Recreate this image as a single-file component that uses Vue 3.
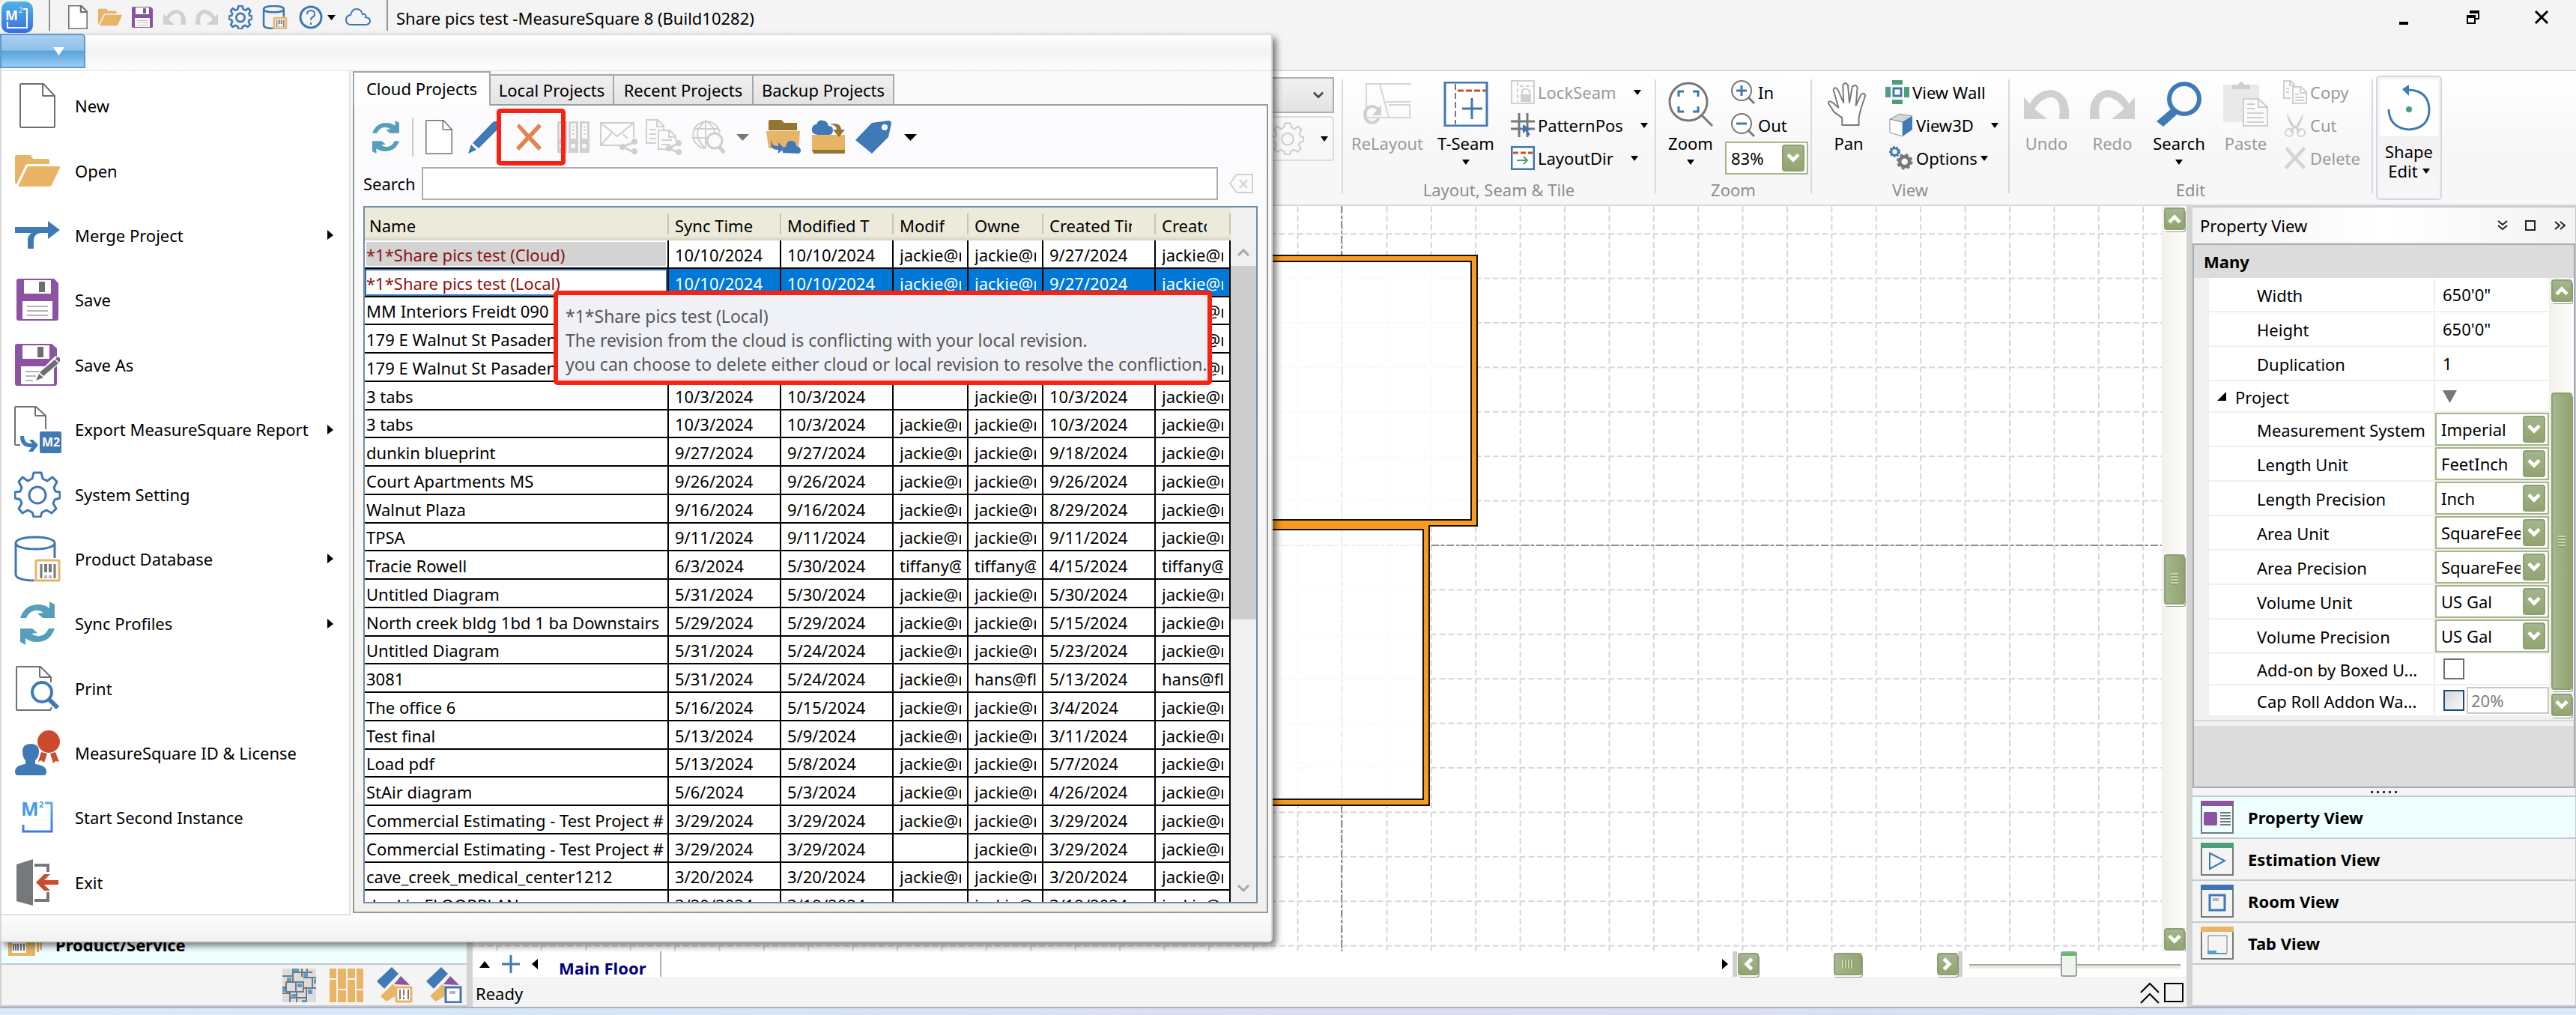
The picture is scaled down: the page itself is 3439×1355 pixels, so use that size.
<script setup>
import { ref } from 'vue'

const menu = [
  { label: 'New', icon: 'doc', w: 48, h: 60 },
  { label: 'Open', icon: 'folder', w: 60, h: 42 },
  { label: 'Merge Project', icon: 'merge', w: 60, h: 37, sub: true },
  { label: 'Save', icon: 'save', w: 56, h: 56 },
  { label: 'Save As', icon: 'saveas', w: 60, h: 56 },
  { label: 'Export MeasureSquare Report', icon: 'export', w: 63, h: 63, sub: true },
  { label: 'System Setting', icon: 'gear', w: 62, h: 62, color: '#3f77b3' },
  { label: 'Product Database', icon: 'db', w: 62, h: 62, sub: true },
  { label: 'Sync Profiles', icon: 'sync', w: 46, h: 58, sub: true },
  { label: 'Print', icon: 'print', w: 58, h: 60 },
  { label: 'MeasureSquare ID & License', icon: 'id', w: 60, h: 60 },
  { label: 'Start Second Instance', icon: 'm2', w: 44, h: 44 },
  { label: 'Exit', icon: 'exit', w: 56, h: 62 }
]

const tabs = [
  { label: 'Cloud Projects', w: 184, on: true },
  { label: 'Local Projects', w: 165 },
  { label: 'Recent Projects', w: 186 },
  { label: 'Backup Projects', w: 188 }
]

const columns = [
  { label: 'Name', w: 406 },
  { label: 'Sync Time', w: 150 },
  { label: 'Modified Time', w: 150 },
  { label: 'Modified By', w: 100 },
  { label: 'Owner', w: 100 },
  { label: 'Created Time', w: 150 },
  { label: 'Creator', w: 100 }
]

const j = 'jackie@m'
const t = 'tiffany@m'
const rows = [
  ['*1*Share pics test (Cloud)', '10/10/2024', '10/10/2024', j, j, '9/27/2024', j],
  ['*1*Share pics test (Local)', '10/10/2024', '10/10/2024', j, j, '9/27/2024', j],
  ['MM Interiors Freidt 090', '', '', '', '', '', j],
  ['179 E Walnut St Pasaden', '', '', '', '', '', j],
  ['179 E Walnut St Pasaden', '', '', '', '', '', j],
  ['3 tabs', '10/3/2024', '10/3/2024', '', j, '10/3/2024', j],
  ['3 tabs', '10/3/2024', '10/3/2024', j, j, '10/3/2024', j],
  ['dunkin blueprint', '9/27/2024', '9/27/2024', j, j, '9/18/2024', j],
  ['Court Apartments MS', '9/26/2024', '9/26/2024', j, j, '9/26/2024', j],
  ['Walnut Plaza', '9/16/2024', '9/16/2024', j, j, '8/29/2024', j],
  ['TPSA', '9/11/2024', '9/11/2024', j, j, '9/11/2024', j],
  ['Tracie Rowell', '6/3/2024', '5/30/2024', t, t, '4/15/2024', t],
  ['Untitled Diagram', '5/31/2024', '5/30/2024', j, j, '5/30/2024', j],
  ['North creek bldg 1bd 1 ba Downstairs', '5/29/2024', '5/29/2024', j, j, '5/15/2024', j],
  ['Untitled Diagram', '5/31/2024', '5/24/2024', j, j, '5/23/2024', j],
  ['3081', '5/31/2024', '5/24/2024', j, 'hans@fl', '5/13/2024', 'hans@fl'],
  ['The office 6', '5/16/2024', '5/15/2024', j, j, '3/4/2024', j],
  ['Test final', '5/13/2024', '5/9/2024', j, j, '3/11/2024', j],
  ['Load pdf', '5/13/2024', '5/8/2024', j, j, '5/7/2024', j],
  ['StAir diagram', '5/6/2024', '5/3/2024', j, j, '4/26/2024', j],
  ['Commercial Estimating - Test Project #', '3/29/2024', '3/29/2024', j, j, '3/29/2024', j],
  ['Commercial Estimating - Test Project #', '3/29/2024', '3/29/2024', '', j, '3/29/2024', j],
  ['cave_creek_medical_center1212', '3/20/2024', '3/20/2024', j, j, '3/20/2024', j],
  ['dunkin FLOORPLAN', '3/20/2024', '3/19/2024', '', j, '3/19/2024', j]
]

const props = [
  { name: 'Width', text: '650\'0"' },
  { name: 'Height', text: '650\'0"' },
  { name: 'Duplication', text: '1' },
  { name: 'Project', head: true },
  { name: 'Measurement System', pick: 'Imperial' },
  { name: 'Length Unit', pick: 'FeetInch' },
  { name: 'Length Precision', pick: 'Inch' },
  { name: 'Area Unit', pick: 'SquareFeet' },
  { name: 'Area Precision', pick: 'SquareFeet' },
  { name: 'Volume Unit', pick: 'US Gal' },
  { name: 'Volume Precision', pick: 'US Gal' },
  { name: 'Add-on by Boxed U...', check: true },
  { name: 'Cap Roll Addon Wa...', check: true, pct: '20%' }
]

const views = [
  { label: 'Property View', icon: 'vprop', on: true },
  { label: 'Estimation View', icon: 'vest' },
  { label: 'Room View', icon: 'vroom' },
  { label: 'Tab View', icon: 'vtab' }
]

const tools = [
  { name: 'Share project', icon: 'mail', w: 50, h: 48 },
  { name: 'Share copy', icon: 'sharecopy', w: 48, h: 48 },
  { name: 'View on web', icon: 'globe', w: 46, h: 46 }
]
const query = ref('')
const zoomLevel = ref(47)
</script>

<template>
  <div class="app">
    <svg class="defs" width="0" height="0" aria-hidden="true">
      <defs>
        <linearGradient id="logo-fill" x1="0" y1="0" x2="0" y2="1">
          <stop offset="0" stop-color="#4eb2e6" /><stop offset="1" stop-color="#3a6fe0" />
        </linearGradient>
        <linearGradient id="m2-fill" x1="0" y1="0" x2="0" y2="1">
          <stop offset="0" stop-color="#56b0e8" /><stop offset="1" stop-color="#3f78e0" />
        </linearGradient>
      </defs>
      <symbol id="i-doc" viewBox="0 0 48 60" preserveAspectRatio="none"><path class="thin" d="M2 1h30l15 16v41q0 1-1 1H2q-1 0-1-1V2q0-1 1-1z" fill="#fff" stroke="#6f7073" /><path class="thin" d="M31 1v15q0 1 1 1h15" fill="none" stroke="#6f7073" /></symbol>
      <symbol id="i-folder" viewBox="0 0 60 42"><path d="M0 2q0-2 2-2h18q2 0 3 3l1 2h19q3 0 3 3v4H18q-3 0-4 2L2 39q-2-1-2-3z" fill="#e8b566" /><path d="M17 15h42q2 0 1 2L49 40q-1 2-3 2H4z" fill="#e8b566" /></symbol>
      <symbol id="i-merge" viewBox="0 0 60 37"><path d="M0 8h44V0l16 12-16 12v-8H36q-10 0-11 9v12h-8V25q0-5 5-9H0z" fill="#3f7ab6" /></symbol>
      <symbol id="i-save" viewBox="0 0 56 56"><path d="M3 0h47l6 6v47q0 3-3 3H3q-3 0-3-3V3q0-3 3-3z" fill="#8c53a2" /><path d="M10 2h36v18H10zM8 30h40v24H8z" fill="#fff" /><path d="M30 4h8v14h-8z" fill="#6d6e71" /><path d="M14 37h28M14 43h28M14 49h28" stroke="#b5b5b7" stroke-width="2" /></symbol>
      <symbol id="i-saveas" viewBox="0 0 60 56"><path d="M3 0h46l7 6v47q0 3-3 3H3q-3 0-3-3V3q0-3 3-3z" fill="#8c53a2" /><path d="M10 2h36v18H10zM8 30h44v24H8z" fill="#fff" /><path d="M30 4h8v14h-8z" fill="#6d6e71" /><path d="M14 37h20M14 43h14M14 49h10" stroke="#b5b5b7" stroke-width="2" /><path d="M27 51l5-13 22-22 9 7-25 22z" fill="#fff" /><path d="M28 49l4-9 6 5zM33 38l20-17 5 5-20 17zM54 20l2-2q2-1 4 1t0 4l-1 2z" fill="#6d6e71" /></symbol>
      <symbol id="i-export" viewBox="0 0 63 63"><path d="M8 52H2q-1 0-1-1V2q0-1 1-1h27l13 12v18M28 1v11q0 1 1 1h13" fill="none" stroke="#6f7073" stroke-width="2" /><path d="M8 40h5q0 10 10 10h1l-4-5h5l7 7-7 9h-6l4-6q-15 1-15-15z" fill="#3f7ab6" /><rect x="34" y="34" width="29" height="29" rx="2" fill="#3f7ab6" /></symbol>
      <symbol id="i-gear" viewBox="0 0 62 62"><path class="bold" d="M26 2h10l2 8 6 3 7-5 6 6-4 8 2 5 6 1v8l-7 2-2 5 4 7-6 6-7-4-6 3-2 6H26l-2-6-6-3-7 4-5-6 4-7-2-5-7-2v-8l7-1 2-5-4-8 5-6 7 5 6-3z" fill="none" stroke="currentColor" stroke-linejoin="round" /><circle class="bold" cx="31" cy="32" r="11" fill="none" stroke="currentColor" /></symbol>
      <symbol id="i-db" viewBox="0 0 62 62"><path class="bold" d="M54 30V10c0-5-12-8-26-8S2 5 2 10s12 8 26 8 26-3 26-8M2 10v42c0 5 11 8 25 8" fill="none" stroke="#3f77b3" /><rect class="bold" x="29" y="33" width="31" height="27" rx="1" fill="#fff" stroke="#e8b566" /><path d="M36 38v19M54 38v19" stroke="#77787b" stroke-width="3" /><path d="M42 38v11M48 38v11" stroke="#77787b" stroke-width="4" /><path d="M42 53v4M48 53v4" stroke="#b5b5b7" stroke-width="4" /></symbol>
      <symbol id="i-sync" viewBox="0 0 46 58" preserveAspectRatio="none"><path d="M0 22Q6 4 24 4q9 0 15 5V0l7 4v18H30l-7-6 8-1q-5-4-11-3-8 1-12 10z" fill="#559fbc" /><path d="M46 36Q40 54 22 54q-9 0-15-5v9l-7-4V36h16l7 6-8 1q5 4 11 3 8-1 12-10z" fill="#559fbc" /></symbol>
      <symbol id="i-print" viewBox="0 0 58 60"><path d="M47 22V15L33 1H2q-1 0-1 1v56q0 1 1 1h44l2-4M32 1v13q0 1 1 1h15" fill="none" stroke="#6f7073" stroke-width="2" /><circle cx="35" cy="35" r="13" fill="#fff" stroke="#3f7ab6" stroke-width="4" /><path d="M45 45l11 11" stroke="#3f7ab6" stroke-width="6" /></symbol>
      <symbol id="i-id" viewBox="0 0 60 60"><path d="M10 28q0-10 11-10t11 10q0 8-5 12v5q15 2 15 10 0 5-4 5H4q-4 0-4-5 0-8 14-10v-5q-4-4-4-12z" fill="#3f7ab6" /><circle cx="45" cy="15" r="15" fill="#cc4b2f" /><path d="M35 29l8 2-4 12-4-3-4 2zM47 31l7-2 5 13-5-1-3 3z" fill="#cc4b2f" /></symbol>
      <symbol id="i-m2" viewBox="0 0 44 44"><path d="M3 32v9h38V3h-9" fill="none" stroke="url(#m2-fill)" stroke-width="3" /></symbol>
      <symbol id="i-exit" viewBox="0 0 56 62"><path d="M0 7l22-7v62L0 56z" fill="#77787b" /><path d="M24 8h18v9M24 55h18V44" fill="none" stroke="#77787b" stroke-width="4" /><path d="M26 31l11-11h8l-8 8h19v6H37l8 8h-8z" fill="#cc4b2f" /></symbol>
      <symbol id="i-undo" viewBox="0 0 60 40" preserveAspectRatio="none"><path d="M0 10l8 9Q18 0 38 0q25 6 22 40H47q4-30-12-30-12 2-21 16l17 14H0z" fill="#d0d0d1" /></symbol>
      <symbol id="i-help" viewBox="0 0 32 32"><circle cx="16" cy="16" r="14" fill="none" stroke="#3f77b3" stroke-width="3" /><path d="M11 12q0-5 5-5t5 5q0 3-3 4-2 1-2 4M16 23v3" fill="none" stroke="#3f77b3" stroke-width="2" /></symbol>
      <symbol id="i-cloud" viewBox="0 0 34 24"><path d="M8 22q-7 0-7-7 0-5 6-6Q9 1 15 1t8 7q3-1 4 1 1 1 0 3 6 1 6 5t-5 5z" fill="none" stroke="#3f77b3" stroke-width="2" /></symbol>
      <symbol id="i-tri" viewBox="0 0 10 7" preserveAspectRatio="none"><path d="M0 0h10L5 7z" fill="currentColor" /></symbol>
      <symbol id="i-chev" viewBox="0 0 16 12"><path d="M2 2l6 6 6-6" fill="none" stroke="currentColor" stroke-width="4" /></symbol>
      <symbol id="i-thin" viewBox="0 0 16 12"><path d="M1 2l7 7 7-7" fill="none" stroke="currentColor" stroke-width="3" /></symbol>
      <symbol id="i-pencil" viewBox="0 0 42 44"><path d="M0 44l4-12 7 7zM6 30L32 3q4-4 8-1t1 8L14 37z" fill="#3f7ab6" /></symbol>
      <symbol id="i-x" viewBox="0 0 36 36"><path d="M2 4l3-4 13 14L31 0l4 4-13 14 13 14-4 4-13-14L5 36l-4-4 13-14z" fill="currentColor" /></symbol>
      <symbol id="i-binder" viewBox="0 0 44 42"><path d="M0 0h13v42H0zM15 0h13v42H15zM30 0h13v42H30z" fill="#d0d0d0" /><path d="M3 3h7v20H3zM18 3h7v20h-7zM33 3h7v20h-7z" fill="#fbfbfd" /><path d="M5 7h3M5 12h3M5 17h3M20 7h3M20 12h3M20 17h3M35 7h3M35 12h3M35 17h3" stroke="#d0d0d0" stroke-width="2" /><circle cx="6" cy="33" r="3" fill="#fbfbfd" /><circle cx="21" cy="33" r="3" fill="#fbfbfd" /><circle cx="36" cy="33" r="3" fill="#fbfbfd" /></symbol>
      <symbol id="i-mail" viewBox="0 0 50 44"><path d="M28 33H1V3h44v20M1 3l22 18L45 3M1 33l15-17M31 18l6 6" fill="none" stroke="#cfcfcf" stroke-width="2" /><path d="M45 29L30 35l15 7" fill="none" stroke="#cfcfcf" stroke-width="3" /><circle cx="46" cy="28" r="4" fill="#cfcfcf" /><circle cx="30" cy="35" r="4" fill="#cfcfcf" /><circle cx="46" cy="41" r="4" fill="#cfcfcf" /></symbol>
      <symbol id="i-sharecopy" viewBox="0 0 48 48"><path d="M14 32H1V1h15l8 8v5M15 1v9h9M5 14h9M5 20h9M5 26h9M34 40H17V15h15l8 8v6M31 15v9h9M21 28h14M21 34h12" fill="none" stroke="#d0d0d0" stroke-width="2" /><path d="M44 32L31 39l13 6" fill="none" stroke="#cfcfcf" stroke-width="3" /><circle cx="44" cy="32" r="4" fill="#cfcfcf" /><circle cx="31" cy="39" r="4" fill="#cfcfcf" /><circle cx="44" cy="44" r="4" fill="#cfcfcf" /></symbol>
      <symbol id="i-globe" viewBox="0 0 46 46"><g fill="none" stroke="#cfcfcf" stroke-width="2"><path d="M18 38A18 18 0 1 1 38 17M19 1q-22 18 0 37M19 1q12 8 12 17M19 1v36M3 12h33M1 24h20" /><circle cx="31" cy="28" r="10" stroke-width="3" fill="#fbfbfd" /><path d="M37 36l7 8" stroke-width="5" /></g></symbol>
      <symbol id="i-cloudin" viewBox="0 0 46 46"><path d="M3 2q0-2 2-2h15l4 4h17v10H3z" fill="#957530" /><path d="M0 15h45l-2 23H3z" fill="#e8b566" /><path d="M22 44q-2-8 4-8 1-9 8-8 6 1 6 7 6 1 6 6 0 4-4 4z" fill="#3f7ab6" /><path d="M7 26q-1 10 9 9v-5l8 8-8 7v-5Q3 40 7 26z" fill="#3f7ab6" /></symbol>
      <symbol id="i-cloudout" viewBox="0 0 44 46"><path d="M0 20h44v22H0z" fill="#e8b566" /><path d="M0 40h44v5H2z" fill="#957530" /><path d="M8 20q-9-1-8-8 1-6 6-6 3-7 9-5 6 1 7 7 6 0 6 6t-6 6z" fill="#3f7ab6" /><path d="M24 6q14-4 15 7h5l-8 10-8-10h5q0-6-9-7z" fill="#957530" /></symbol>
      <symbol id="i-tag" viewBox="0 0 48 44"><path d="M0 26L22 3l22-3q4 0 4 4l-4 18-22 22z" fill="#3f7ab6" /><circle cx="39" cy="9" r="4" fill="#fff" /></symbol>
      <symbol id="i-clear" viewBox="0 0 32 26"><path d="M10 1h21v24H10L1 13zM14 8l10 11M24 8L14 19" fill="none" stroke="#d0d0d0" stroke-width="2" /></symbol>
      <symbol id="i-relayout" viewBox="0 0 66 56"><path d="M5 1h18l12 45H5zM23 1h42M65 25H31M65 46H36M35 29h28v17" fill="none" stroke="#d6d6d6" stroke-width="2" /><path d="M21 35q-7-7-14-2-6 6-3 14 4 8 13 5l5-5" fill="none" stroke="#cfcfcf" stroke-width="4" /><path d="M25 29v14H13z" fill="#cfcfcf" /></symbol>
      <symbol id="i-tseam" viewBox="0 0 60 60"><path d="M2 1h56v58H2z" fill="#fff" stroke="#3f77b3" stroke-width="3" /><path d="M16 3v54" stroke="#77787b" stroke-width="2" stroke-dasharray="8 4" /><path d="M19 12h38" stroke="#cc4b2f" stroke-width="3" stroke-dasharray="8 3" /><path d="M38 22v28M25 36h27" stroke="#3f77b3" stroke-width="3" /></symbol>
      <symbol id="i-lock" viewBox="0 0 32 32"><path d="M1 1h30v30H1z" fill="none" stroke="#d0d0d0" stroke-width="2" /><path d="M9 3v26M12 8h18" stroke="#d0d0d0" stroke-width="2" stroke-dasharray="5 3" /><path d="M13 19h14v10H13z" fill="#d0d0d0" /><path d="M15 19v-5q5-5 10 0v5" fill="none" stroke="#d0d0d0" stroke-width="2" /></symbol>
      <symbol id="i-pattern" viewBox="0 0 32 32"><path d="M11 0v32M22 0v32M0 11h32M0 21h32" stroke="#77787b" stroke-width="3" /><path d="M16 15l11 7-5 1 4 6-3 1-3-6-4 3z" fill="#3f77b3" /></symbol>
      <symbol id="i-layoutdir" viewBox="0 0 32 32"><path d="M1 1h30v30H1z" fill="#fff" stroke="#3f77b3" stroke-width="3" /><path d="M3 9h26" stroke="#cc4b2f" stroke-width="3" stroke-dasharray="7 3" /><path d="M8 19h14M17 14l5 5-5 5" fill="none" stroke="#4d9f7c" stroke-width="2" /></symbol>
      <symbol id="i-zoomfit" viewBox="0 0 60 60"><circle cx="27" cy="27" r="25" fill="#fff" stroke="#77787b" stroke-width="3" /><path d="M45 45l14 14" stroke="#77787b" stroke-width="3" /><path d="M14 20v-7h7M33 13h7v7M40 33v7h-7M21 40h-7v-7" fill="none" stroke="#3f77b3" stroke-width="3" /></symbol>
      <symbol id="i-zoomin" viewBox="0 0 32 32"><circle cx="14" cy="14" r="13" fill="#fff" stroke="#77787b" stroke-width="2" /><path d="M23 23l8 8" stroke="#77787b" stroke-width="3" /><path d="M7 14h14M14 7v14" stroke="#3f77b3" stroke-width="3" /></symbol>
      <symbol id="i-zoomout" viewBox="0 0 32 32"><circle cx="14" cy="14" r="13" fill="#fff" stroke="#77787b" stroke-width="2" /><path d="M23 23l8 8" stroke="#77787b" stroke-width="3" /><path d="M7 14h14" stroke="#3f77b3" stroke-width="3" /></symbol>
      <symbol id="i-pan" viewBox="0 0 58 62"><path d="M20 60V50L9 42 1 30q0-5 6-1l8 7-7-25q2-5 6 0l8 18-1-24q3-6 7 0l2 24 4-22q5-4 7 1l-2 25 7-15q4-4 6 1L46 37l-3 12v11z" fill="#fff" stroke="#77787b" stroke-width="2" stroke-linejoin="round" /></symbol>
      <symbol id="i-viewwall" viewBox="0 0 32 32"><path d="M9 0h14v6H9zM9 26h14v6H9zM0 9h7v14H0zM25 9h7v14h-7z" fill="#4d9f7c" /><path d="M11 11h10v10H11z" fill="#fff" stroke="#3f77b3" stroke-width="3" /></symbol>
      <symbol id="i-view3d" viewBox="0 0 32 32"><path d="M1 8l17 4v19L1 26z" fill="#fff" stroke="#8c8d90" stroke-width="1" /><path d="M1 8L14 1l17 3-13 8z" fill="#d4d8dc" stroke="#8c8d90" stroke-width="1" /><path d="M18 12l13-8v18l-13 9z" fill="#3f7ab6" /></symbol>
      <symbol id="i-options" viewBox="0 0 34 34"><circle cx="8" cy="8" r="5" fill="none" stroke="#3f77b3" stroke-width="3" /><circle cx="8" cy="8" r="7" fill="none" stroke="#3f77b3" stroke-width="2" stroke-dasharray="3 2" /><circle cx="22" cy="22" r="7" fill="none" stroke="#77787b" stroke-width="5" /><circle cx="22" cy="22" r="10" fill="none" stroke="#77787b" stroke-width="3" stroke-dasharray="4 4" /></symbol>
      <symbol id="i-search" viewBox="0 0 60 60"><circle cx="37" cy="23" r="20" fill="none" stroke="#3f7ab6" stroke-width="6" /><path d="M20 36l7 8L9 60 0 53z" fill="#3f7ab6" /></symbol>
      <symbol id="i-paste" viewBox="0 0 60 60"><path d="M0 4h48v50H0z" fill="#e9e9ea" /><path d="M12 4h8q4-8 8 0h8v6H12z" fill="#cfcfd0" /><path d="M27 23h20l12 11v25H27z" fill="#fafafa" stroke="#cfcfd0" stroke-width="2" /><path d="M47 23v11h12M32 30h10M32 36h10M32 42h22M32 48h22M32 54h22" fill="none" stroke="#cfcfd0" stroke-width="2" /></symbol>
      <symbol id="i-copy" viewBox="0 0 32 32"><path d="M10 24H1V1h9l6 6M9 1v6h7M4 11h4M4 16h4M13 9h11l7 7v15H13zM23 9v8h8M16 19h5M16 23h12M16 27h12" fill="none" stroke="#d0d0d0" stroke-width="2" /></symbol>
      <symbol id="i-cut" viewBox="0 0 30 32"><path d="M4 0l9 16-2 3Q5 10 4 0zM26 0l-9 16 2 3q6-9 7-19z" fill="#d0d0d0" /><path d="M15 17l6 8M15 17l-6 8" stroke="#d0d0d0" stroke-width="3" /><circle cx="7" cy="26" r="5" fill="none" stroke="#d0d0d0" stroke-width="2" /><circle cx="23" cy="26" r="5" fill="none" stroke="#d0d0d0" stroke-width="2" /></symbol>
      <symbol id="i-shape" viewBox="0 0 58 62"><path d="M2 33Q3 58 29 60 56 58 56 33 55 8 29 7" fill="none" stroke="#3f7ab6" stroke-width="3" /><path d="M20 6l9-6v15z" fill="#3f7ab6" /><circle cx="29" cy="33" r="4" fill="#4d9f7c" /></symbol>
      <symbol id="i-vprop" viewBox="0 0 44 44"><path d="M1 6h42v37H1z" fill="none" stroke="#77787b" stroke-width="2" /><path d="M0 0h44v7H0z" fill="#8c53a2" /><rect x="4" y="15" width="18" height="18" rx="2" fill="#8c53a2" /><path d="M26 16h14M26 20h14M26 24h14M26 28h14M26 32h14" stroke="#77787b" stroke-width="2" /></symbol>
      <symbol id="i-vest" viewBox="0 0 44 44"><path d="M1 6h42v37H1z" fill="none" stroke="#77787b" stroke-width="2" /><path d="M0 0h44v7H0z" fill="#4d9f7c" /><path d="M12 14l20 10-20 11z" fill="none" stroke="#3f77b3" stroke-width="2" /></symbol>
      <symbol id="i-vroom" viewBox="0 0 44 44"><path d="M1 6h42v37H1z" fill="none" stroke="#77787b" stroke-width="2" /><path d="M0 0h44v7H0z" fill="#3f77b3" /><path d="M12 14h20v20H12z" fill="none" stroke="#3f77b3" stroke-width="3" /><path d="M16 18h8v4h-8z" fill="#b5b5b7" /></symbol>
      <symbol id="i-vtab" viewBox="0 0 44 44"><path d="M1 6h42v37H1z" fill="none" stroke="#77787b" stroke-width="2" /><path d="M0 0h44v7H0z" fill="#e8b566" /><path d="M10 35V12h25v23" fill="none" stroke="#77787b" stroke-width="1" /><path d="M9 32h12v3h14v2H9z" fill="#559fbc" /></symbol>
      <symbol id="i-tiles" viewBox="0 0 45 45"><path d="M0 0h45v45H0z" fill="#dcdcdc" /><path d="M14 0v6M26 0v6M14 5h26M14 5v13M0 10h14M26 5v6M5 18h24M28 18v12M33 0v5M28 12h17M0 25h6M5 18v13M18 18v14M5 31h24M40 12v15M28 26h17M19 31v14M10 31v14M10 39h22M32 26v19M0 33h10" fill="none" stroke="#77787b" stroke-width="2" /><path d="M14 0h8v4h-8zM6 12h6v5H6zM28 6h6v5h-6zM20 20h6v5h-6zM0 26h4v5H0zM42 14h3v6h-3zM34 28h6v6h-6zM12 34h6v5h-6zM26 42h6v3h-6z" fill="#559fd0" /></symbol>
      <symbol id="i-planks" viewBox="0 0 45 45"><path d="M0 0h9v13H0zM0 15h9v30H0zM11 0h11v27H11zM11 29h11v16H11zM24 0h10v13H24zM24 15h10v30H24zM36 0h9v27h-9zM36 29h9v16h-9z" fill="#e8b566" /></symbol>
      <symbol id="i-prod1" viewBox="0 0 48 48"><path d="M0 19L20 0l9 9L10 29z" fill="#3f7ab6" /><path d="M23 23l9-11 12 12z" fill="#8c53a2" /><path d="M5 39l16-16 5 3v12l-13 8z" fill="#e8b566" /><rect x="26" y="27" width="20" height="19" rx="1" fill="#fff" stroke="#e8b566" stroke-width="3" /><path d="M31 30v13M36 30v8M42 30v13M36 40v3" stroke="#77787b" stroke-width="2" /></symbol>
      <symbol id="i-prod2" viewBox="0 0 48 48"><path d="M0 19L20 0l9 9L10 29z" fill="#3f7ab6" /><path d="M23 23l9-11 12 12z" fill="#8c53a2" /><path d="M5 39l16-16 5 3v12l-13 8z" fill="#e8b566" /><path d="M26 27h20v20H26z" fill="#fff" stroke="#3f77b3" stroke-width="3" /><path d="M31 32h8v4h-8z" fill="#b5b5b7" /></symbol>
      <symbol id="i-catalog" viewBox="0 0 45 40"><path d="M0 0h36v38H0zM38 0h3v33h-3zM42 0h3v30h-3z" fill="#e8b566" /><path d="M5 20h19v14H5z" fill="#fff" /><path d="M7 22v9M10 22v9M13 22v9M17 22v9M21 22v9" stroke="#77787b" stroke-width="2" /></symbol>
    </svg>

    <header class="titlebar">
      <svg class="logo" viewBox="0 0 42 42"><rect width="42" height="42" rx="10" fill="url(#logo-fill)" /><path d="M8 27v8h26V10h-5" fill="none" stroke="#fff" stroke-width="2" /><text x="5" y="25" font-family="Noto Sans, sans-serif" font-weight="700" font-size="18" fill="#fff">M</text><text x="23" y="15" font-family="Noto Sans, sans-serif" font-size="9" fill="#fff">2</text></svg>
      <i class="bar"></i>
      <nav class="quick">
        <button aria-label="New"><svg width="26" height="32"><use href="#i-doc" /></svg></button>
        <button aria-label="Open"><svg width="32" height="24"><use href="#i-folder" /></svg></button>
        <button aria-label="Save"><svg width="28" height="28"><use href="#i-save" /></svg></button>
        <button aria-label="Undo"><svg width="30" height="20"><use href="#i-undo" /></svg></button>
        <button aria-label="Redo"><svg class="flip" width="30" height="20"><use href="#i-undo" /></svg></button>
        <button aria-label="Settings" class="blue"><svg width="32" height="32"><use href="#i-gear" /></svg></button>
        <button aria-label="Database"><svg width="34" height="32"><use href="#i-db" /></svg></button>
      </nav>
      <button aria-label="Help"><svg width="32" height="32"><use href="#i-help" /></svg></button>
      <svg class="tri" width="11" height="7"><use href="#i-tri" /></svg>
      <button class="cloudbtn" aria-label="Cloud"><svg width="34" height="24"><use href="#i-cloud" /></svg></button>
      <i class="bar"></i>
      <h1>Share pics test -MeasureSquare 8 (Build10282)</h1>
      <div class="winbtns">
        <button aria-label="Minimize"><svg width="20" height="20"><path d="M4 16h12v4H4z" /></svg></button>
        <button aria-label="Restore"><svg width="20" height="20"><path d="M7 2h11v10h-4M3 8h10v10H3z" fill="none" stroke="#000" stroke-width="2" /><path d="M6 1h13v4H6zM2 7h12v4H2z" /></svg></button>
        <button aria-label="Close"><svg width="20" height="20"><path d="M2 2l16 16M18 2L2 18" stroke="#000" stroke-width="3" /></svg></button>
      </div>
    </header>

    <section class="ribbon">
      <div class="group lead">
        <button class="combo-end" aria-label="Product list"><svg width="14" height="12"><use href="#i-thin" /></svg></button>
        <button class="gear-end" aria-label="Product options"><svg width="44" height="44"><use href="#i-gear" /></svg><svg class="tri" width="10" height="7"><use href="#i-tri" /></svg></button>
      </div>
      <div class="group g-layout">
        <div class="tools">
          <button class="big off w-118"><svg width="66" height="60"><use href="#i-relayout" /></svg><span>ReLayout</span></button>
          <button class="big w-90"><svg width="60" height="60"><use href="#i-tseam" /></svg><span>T-Seam</span><svg width="10" height="7"><use href="#i-tri" /></svg></button>
          <div class="stack pad-16">
            <button class="off"><svg width="32" height="32"><use href="#i-lock" /></svg><span>LockSeam</span><svg class="tri far" width="10" height="7"><use href="#i-tri" /></svg></button>
            <button><svg width="32" height="32"><use href="#i-pattern" /></svg><span>PatternPos</span><svg class="tri far" width="10" height="7"><use href="#i-tri" /></svg></button>
            <button><svg width="32" height="32"><use href="#i-layoutdir" /></svg><span>LayoutDir</span><svg class="tri far" width="10" height="7"><use href="#i-tri" /></svg></button>
          </div>
        </div>
        <p>Layout, Seam &amp; Tile</p>
      </div>
      <div class="group g-zoom">
        <div class="tools">
          <button class="big w-90"><svg width="60" height="60"><use href="#i-zoomfit" /></svg><span>Zoom</span><svg width="10" height="7"><use href="#i-tri" /></svg></button>
          <div class="stack">
            <button class="pad-8"><svg width="32" height="32"><use href="#i-zoomin" /></svg><span>In</span></button>
            <button class="pad-8"><svg width="32" height="32"><use href="#i-zoomout" /></svg><span>Out</span></button>
            <div class="pick zoom-pick">
              <select aria-label="Zoom level"><option>83%</option></select>
              <i><svg width="20" height="14"><use href="#i-chev" /></svg></i>
            </div>
          </div>
        </div>
        <p>Zoom</p>
      </div>
      <div class="group g-view">
        <div class="tools">
          <button class="big w-98"><svg width="58" height="60"><use href="#i-pan" /></svg><span>Pan</span></button>
          <div class="stack">
            <button><svg width="32" height="32"><use href="#i-viewwall" /></svg><span>View Wall</span></button>
            <button class="pad-5"><svg width="32" height="32"><use href="#i-view3d" /></svg><span>View3D</span><svg class="tri far" width="10" height="7"><use href="#i-tri" /></svg></button>
            <button class="pad-5"><svg width="32" height="34"><use href="#i-options" /></svg><span>Options</span><svg class="tri" width="10" height="7"><use href="#i-tri" /></svg></button>
          </div>
        </div>
        <p>View</p>
      </div>
      <div class="group g-edit">
        <div class="tools">
          <button class="big off w-98"><svg width="60" height="60"><use href="#i-undo" y="11" height="39" /></svg><span>Undo</span></button>
          <button class="big off w-78"><svg width="60" height="60" class="flip"><use href="#i-undo" y="11" height="39" /></svg><span>Redo</span></button>
          <button class="big w-100"><svg width="60" height="60"><use href="#i-search" /></svg><span>Search</span><svg width="10" height="7"><use href="#i-tri" /></svg></button>
          <button class="big off w-78"><svg width="60" height="60"><use href="#i-paste" /></svg><span>Paste</span></button>
          <div class="stack pad-11">
            <button class="off"><svg width="32" height="32"><use href="#i-copy" /></svg><span>Copy</span></button>
            <button class="off"><svg width="32" height="32"><use href="#i-cut" /></svg><span>Cut</span></button>
            <button class="off pale"><svg width="32" height="30"><use href="#i-x" /></svg><span>Delete</span></button>
          </div>
        </div>
        <p>Edit</p>
      </div>
      <button class="shape"><svg width="58" height="62"><use href="#i-shape" /></svg><span>Shape</span><span>Edit <svg width="10" height="7"><use href="#i-tri" /></svg></span></button>
    </section>

    <main class="main">
      <aside class="dock-left">
        <div class="product"><svg width="45" height="40"><use href="#i-catalog" /></svg><strong>Product/Service</strong></div>
        <div class="dock-tools">
          <button aria-label="Tile patterns"><svg width="45" height="45"><use href="#i-tiles" /></svg></button>
          <button aria-label="Plank patterns"><svg width="45" height="45"><use href="#i-planks" /></svg></button>
          <button aria-label="Product list"><svg width="48" height="48"><use href="#i-prod1" /></svg></button>
          <button aria-label="Product rooms"><svg width="48" height="48"><use href="#i-prod2" /></svg></button>
        </div>
      </aside>
      <div class="split"></div>

      <section class="center">
        <div class="canvas-row">
          <svg class="canvas" aria-label="Floor plan">
            <defs>
              <pattern id="grid" x="1160" y="452" width="59.4" height="59.4" patternUnits="userSpaceOnUse">
                <path d="M0 1h59.4" stroke="#d6d6d6" stroke-width="2" stroke-dasharray="7.88 4" />
                <path d="M1 0v59.4" stroke="#d6d6d6" stroke-width="2" stroke-dasharray="7.88 4" />
              </pattern>
            </defs>
            <rect width="100%" height="100%" fill="#fff" />
            <rect width="100%" height="100%" fill="url(#grid)" />
            <path d="M1160 0v2000" class="axis" />
            <path d="M0 453h4000" class="axis" />
            <g fill="#fff" fill-opacity=".85">
              <rect x="500" y="70" width="837" height="353" />
              <rect x="500" y="427" width="773" height="369" />
            </g>
            <g fill="none" stroke="#111" stroke-width="10"><rect x="500" y="428" width="773" height="368" /><rect x="500" y="70" width="837" height="353" /></g>
            <g fill="none" stroke="#fb9a22" stroke-width="6"><rect x="500" y="428" width="773" height="368" /><rect x="500" y="70" width="837" height="353" /></g>
          </svg>
          <div class="vscroll canvas-scroll">
            <button class="gbtn" aria-label="Scroll up"><svg class="up" width="20" height="14"><use href="#i-chev" /></svg></button>
            <div class="rail"><div class="gthumb"></div></div>
            <button class="gbtn" aria-label="Scroll down"><svg width="20" height="14"><use href="#i-chev" /></svg></button>
          </div>
        </div>
        <div class="floorbar">
          <button aria-label="Floor list"><svg class="up" width="14" height="9"><use href="#i-tri" /></svg></button>
          <button aria-label="Add floor"><svg width="24" height="24"><path d="M12 0v24M0 12h24" stroke="#3f77b3" stroke-width="3" /></svg></button>
          <button aria-label="Previous floor"><svg width="8" height="14"><path d="M8 0v14L0 7z" /></svg></button>
          <a href="#main-floor">Main Floor</a>
          <span class="grow"></span>
          <button class="next" aria-label="Next floor"><svg width="8" height="14"><path d="M0 0v14l8-7z" /></svg></button>
          <div class="hscroll">
            <button class="gbtn" aria-label="Scroll left"><svg class="left" width="20" height="14"><use href="#i-chev" /></svg></button>
            <div class="gthumb wide"></div>
            <button class="gbtn" aria-label="Scroll right"><svg class="right" width="20" height="14"><use href="#i-chev" /></svg></button>
          </div>
          <input v-model="zoomLevel" class="slider" type="range" min="0" max="100" aria-label="Zoom" />
        </div>
        <footer class="status">
          <span>Ready</span>
          <svg width="60" height="32"><path d="M2 15l12-12 12 12M2 29l12-12 12 12" fill="none" stroke="#000" stroke-width="2" /><path d="M34 3h24v24H34z" fill="none" stroke="#000" stroke-width="2" /></svg>
        </footer>
      </section>
      <div class="split"></div>

      <aside class="dock-right">
        <div class="dock-head">
          <h2>Property View</h2>
          <svg width="92" height="16"><g fill="none" stroke="#222" stroke-width="2"><path d="M1 2l6 5 6-5M1 8l6 5 6-5M38 2h12v12H38zM77 3l6 5-6 5M84 3l6 5-6 5" /></g></svg>
        </div>
        <div class="propbox">
          <h3>Many</h3>
          <div class="proprow">
            <div class="props">
              <div v-for="p in props" :key="p.name" class="prop" :class="{ head: p.head, short: p.check }">
                <label :for="'p-' + p.name">{{ p.name }}</label>
                <div class="val">
                  <div v-if="p.pick" class="pick">
                    <select :id="'p-' + p.name"><option>{{ p.pick }}</option></select>
                    <i><svg width="20" height="14"><use href="#i-chev" /></svg></i>
                  </div>
                  <template v-else-if="p.check">
                    <input :id="'p-' + p.name" type="checkbox" :class="{ tinted: p.pct }" />
                    <input v-if="p.pct" class="pct" type="text" :value="p.pct" disabled aria-label="Cap roll add-on waste" />
                  </template>
                  <svg v-else-if="p.head" class="gray" width="19" height="17"><use href="#i-tri" /></svg>
                  <output v-else :id="'p-' + p.name">{{ p.text }}</output>
                </div>
              </div>
            </div>
            <div class="vscroll prop-scroll">
              <button class="gbtn" aria-label="Scroll up"><svg class="up" width="20" height="14"><use href="#i-chev" /></svg></button>
              <div class="rail"><div class="gthumb"></div></div>
              <button class="gbtn" aria-label="Scroll down"><svg width="20" height="14"><use href="#i-chev" /></svg></button>
            </div>
          </div>
          <div class="note"></div>
        </div>
        <div class="grip"><i v-for="n in 5" :key="n"></i></div>
        <button v-for="v in views" :key="v.label" class="view" :class="{ on: v.on }"><svg width="44" height="44"><use :href="'#i-' + v.icon" /></svg>{{ v.label }}</button>
        <div class="dock-foot"></div>
      </aside>
    </main>
    <div class="desk"></div>

    <section class="popup">
      <div class="popup-top"><button class="filebtn" aria-label="File menu"><svg width="15" height="11"><use href="#i-tri" /></svg></button></div>
      <div class="popup-body">
        <nav class="menu">
          <button v-for="m in menu" :key="m.label">
            <span class="ico" :style="{ color: m.color }">
              <svg :width="m.w" :height="m.h">
                <use :href="'#i-' + m.icon" />
                <text v-if="m.icon === 'export'" x="49" y="54" class="badge">M2</text>
                <template v-if="m.icon === 'm2'"><text x="0" y="20" class="mark">M</text><text x="24" y="9" class="sup">2</text></template>
              </svg>
            </span>
            <span>{{ m.label }}</span>
            <svg v-if="m.sub" class="subarrow" width="8" height="13"><path d="M0 0v13l8-6z" /></svg>
          </button>
        </nav>
        <div class="projects">
          <div class="tabs"><button v-for="tab in tabs" :key="tab.label" :class="{ on: tab.on }" :style="{ width: tab.w + 'px' }">{{ tab.label }}</button></div>
          <div class="panel">
            <div class="toolbar">
              <button aria-label="Sync"><svg width="36" height="44"><use href="#i-sync" /></svg></button>
              <i class="vbar"></i>
              <button aria-label="New project"><svg width="36" height="46"><use href="#i-doc" /></svg></button>
              <button aria-label="Rename"><svg width="42" height="44"><use href="#i-pencil" /></svg></button>
              <button aria-label="Delete" class="del"><svg width="36" height="38"><use href="#i-x" /></svg></button>
              <button aria-label="Archive"><svg width="44" height="44"><use href="#i-binder" /></svg></button>
              <button v-for="b in tools" :key="b.icon" :aria-label="b.name"><svg :width="b.w" :height="b.h"><use :href="'#i-' + b.icon" /></svg></button>
              <button aria-label="Web options" class="drop gray"><svg width="17" height="9"><use href="#i-tri" /></svg></button>
              <button aria-label="Download to folder" class="after"><svg width="46" height="46"><use href="#i-cloudin" /></svg></button>
              <button aria-label="Upload folder"><svg width="44" height="46"><use href="#i-cloudout" /></svg></button>
              <button aria-label="Tags"><svg width="48" height="46"><use href="#i-tag" /></svg></button>
              <button aria-label="Tag options" class="drop last"><svg width="17" height="9"><use href="#i-tri" /></svg></button>
            </div>
            <div class="search">
              <label for="q">Search</label>
              <input id="q" v-model="query" type="text" />
              <button aria-label="Clear search"><svg width="32" height="26"><use href="#i-clear" /></svg></button>
            </div>
            <div class="listbox">
              <div class="tablewrap">
                <table>
                  <colgroup><col v-for="c in columns" :key="c.label" :style="{ width: c.w + 'px' }" /></colgroup>
                  <thead><tr><th v-for="c in columns" :key="c.label"><div>{{ c.label }}</div></th></tr></thead>
                  <tbody>
                    <tr v-for="(r, i) in rows" :key="i" :class="{ remote: i === 0, sel: i === 1 }">
                      <td v-for="(c, k) in r" :key="k"><div>{{ c }}</div></td>
                    </tr>
                  </tbody>
                </table>
              </div>
              <div class="winscroll">
                <svg class="up" width="16" height="12"><use href="#i-thin" /></svg>
                <div class="winrail"><div></div></div>
                <svg width="16" height="12"><use href="#i-thin" /></svg>
              </div>
              <div class="tip" role="tooltip">*1*Share pics test (Local)<br />The revision from the cloud is conflicting with your local revision.<br />you can choose to delete either cloud or local revision to resolve the confliction.</div>
            </div>
          </div>
        </div>
      </div>
      <div class="popup-foot"></div>
    </section>
  </div>
</template>

<style>
html, body { margin: 0; background: #f4f4f4; }
</style>

<style scoped>
* { box-sizing: border-box; }
.app { position: relative; display: flex; flex-direction: column; height: 100vh; overflow: hidden; background: #f4f4f4; color: #000; font: 22px/30px "Noto Sans", "Open Sans", sans-serif; }
.defs { position: absolute; }
button, input, select { font: inherit; color: inherit; margin: 0; }
button { display: flex; align-items: center; border: 0; padding: 0; background: none; white-space: nowrap; }
svg { display: block; flex: none; }
h1, h2, h3, p { margin: 0; font-size: inherit; font-weight: 400; white-space: nowrap; }
.thin { stroke-width: var(--line, 2); }
.bold { stroke-width: var(--bold, 3); }
.flip { transform: scaleX(-1); }
.up { transform: rotate(180deg); }
.left { transform: rotate(90deg); }
.right { transform: rotate(-90deg); }
.gray { color: #777; }
.blue { color: #3f77b3; }

.titlebar { --line: 4; --bold: 5; display: flex; align-items: center; flex: none; height: 46px; padding-left: 2px; margin-bottom: 47px; }
.logo { width: 42px; height: 42px; }
.bar { width: 2px; height: 42px; margin: 0 24px 6px 21px; background: #929292; }
.quick { display: flex; justify-content: space-between; align-items: center; width: 293px; }
.quick + button { margin-left: 15px; }
.titlebar .tri { margin: 0 13px 0 6px; }
.cloudbtn + .bar { margin-right: 11px; }
.titlebar h1 { flex: 1; padding-top: 2px; }
.winbtns { display: flex; gap: 72px; padding-right: 36px; }

.ribbon { display: flex; flex: none; height: 182px; padding-top: 6px; border-top: 2px solid #d6d8da; border-bottom: 2px solid #d6d8da; background: linear-gradient(#fff, #f7f7f8 60%, #f7f7f8); }
.group { position: relative; flex: none; display: flex; flex-direction: column; border-right: 2px solid #d9dadd; margin-top: 5px; height: 152px; }
.tools { display: flex; height: 132px; flex: none; margin-top: -5px; }
.group p { line-height: 40px; text-align: center; color: #8d8d8d; }
.lead { width: 1793px; align-items: flex-end; padding-right: 10px; }
.combo-end { justify-content: flex-end; width: 400px; height: 48px; margin-top: -3px; padding-right: 12px; border: 2px solid #b0b0b0; background: linear-gradient(#f1f1f1, #e3e3e3); color: #444; flex: none; }
.gear-end { justify-content: flex-end; width: 400px; height: 60px; margin-top: 4px; border: 2px solid #dcdcdc; border-radius: 4px; color: #cfcfcf; padding-right: 6px; gap: 22px; flex: none; }
.gear-end .tri { color: #000; }
.g-layout { width: 418px; }
.g-zoom { width: 208px; }
.g-view { width: 264px; }
.g-edit { width: 485px; }
.big { flex-direction: column; padding-top: 8px; height: 132px; flex: none; }
.big span { margin: 7px 0; }
.off { color: #9a9a9a; }
.off .tri { color: #000; }
.pale svg { color: #d4d4d4; }
.w-118 { width: 118px; }
.w-90 { width: 92px; }
.w-98 { width: 98px; }
.w-78 { width: 78px; }
.w-100 { width: 100px; }
.stack { display: flex; flex-direction: column; }
.stack > * { height: 44px; flex: none; }
.stack button { gap: 4px; }
.tri.far { margin-left: 19px; }
.pad-16 { padding-left: 14px; }
.pad-11 { padding-left: 11px; }
.stack .pad-8 { padding-left: 8px; }
.stack .pad-5 { padding-left: 5px; }
.shape { flex-direction: column; width: 88px; height: 166px; margin-left: 4px; border: 2px solid #d5d9de; border-radius: 5px; padding-top: 10px; background: linear-gradient(#fff 48%, #f2f2f3 49%, #f8f8f9); box-shadow: inset 0 0 0 3px #f1f5fa; line-height: 26px; flex: none; }
.shape svg + span { margin-top: 14px; }
.shape span { display: flex; align-items: center; gap: 6px; }

.pick { position: relative; height: 44px; border: 2px solid #a6b686; background: #fff; }
.pick select { width: 100%; height: 100%; border: 0; padding: 0 36px 0 6px; background: none; appearance: none; outline: none; overflow: hidden; text-overflow: clip; }
.pick i { position: absolute; right: 3px; top: 2px; bottom: 2px; width: 30px; display: flex; align-items: center; justify-content: center; border: 2px solid #8f9d79; border-radius: 4px; background: linear-gradient(#a3b68c, #92a46e); color: #fff; pointer-events: none; }
.zoom-pick { width: 111px; }

.main { flex: 1; min-height: 0; display: flex; }
.split { width: 8px; flex: none; background: #d3d3d4; }
.dock-left { display: flex; flex-direction: column; justify-content: flex-end; width: 623px; flex: none; border-left: 2px solid #d0d0d2; }
.product { display: flex; align-items: center; gap: 18px; height: 56px; padding: 0 0 2px 9px; background: #efffff; border-bottom: 2px solid #c5c9d0; }
.product strong { padding-top: 6px; }
.dock-tools { display: flex; align-items: center; justify-content: flex-end; gap: 18px; height: 56px; padding-right: 6px; border-bottom: 2px solid #c5c9d0; }

.center { flex: 1; min-width: 0; display: flex; flex-direction: column; }
.canvas-row { flex: 1; min-height: 0; display: flex; }
.canvas { flex: 1; min-width: 0; height: 100%; }
.axis { stroke: #8c8c8c; stroke-width: 2; stroke-dasharray: 10 3 4 3; }
.vscroll { display: flex; flex-direction: column; align-items: center; width: 33px; flex: none; background: linear-gradient(90deg, #f2f0ea, #fdfdfb); padding: 2px 0 1px; }
.rail { flex: 1; display: flex; flex-direction: column; }
.gbtn, .gthumb { width: 28px; height: 30px; flex: none; display: flex; align-items: center; justify-content: center; border: 2px solid #8f9d79; border-radius: 4px; background: linear-gradient(#a4b78e, #93a56f); color: #fff; box-shadow: 0 2px 0 #fff, 1px 3px 0 #8f9d79; }
.gthumb { background: linear-gradient(90deg, #a4b78e, #93a56f); }
.gthumb::after { content: ""; width: 10px; height: 16px; background: repeating-linear-gradient(#c6d9a6 0 2px, #8fa06e 2px 4px); }
.gthumb.wide { width: 38px; }
.gthumb.wide::after { width: 16px; height: 12px; background: repeating-linear-gradient(90deg, #c6d9a6 0 2px, #8fa06e 2px 4px); }
.canvas-scroll .gthumb { height: 67px; margin: auto; }
.floorbar { display: flex; align-items: center; height: 34px; flex: none; background: #fff; padding-left: 9px; }
.floorbar > button { margin-right: 16px; }
.floorbar a { height: 34px; line-height: 44px; padding: 0 18px 0 12px; border-right: 2px solid #b0b0b0; color: #000080; font-weight: 700; text-decoration: none; white-space: nowrap; }
.grow { flex: 1; }
.floorbar .next { margin-right: 6px; }
.hscroll { display: flex; justify-content: space-between; align-items: center; width: 307px; height: 34px; border: solid #d0d0d0; border-width: 0 6px; padding-left: 1px; }
.slider { appearance: none; width: 282px; height: 34px; margin: 0 8px 0 9px; background: linear-gradient(#fff 17px, #a9a9a9 17px 19px, #eeeae0 19px 23px, #fff 23px); }
.slider::-webkit-slider-thumb { appearance: none; width: 22px; height: 34px; border: 2px solid #98a3a8; border-radius: 3px; background: linear-gradient(#57c257 4px, #f1f3ef 4px); }
.status { display: flex; justify-content: space-between; align-items: center; height: 40px; flex: none; padding: 4px 3px 0 4px; }

.dock-right { display: flex; flex-direction: column; width: 512px; flex: none; border: 1px solid #c5c8d0; border-width: 2px 1px 2px 0; }
.dock-head { display: flex; align-items: center; justify-content: space-between; height: 46px; flex: none; padding: 2px 12px 0 10px; background: linear-gradient(90deg, #f3f3f4, #fff 50%, #f3f3f4); }
.propbox { flex: 1; min-height: 0; display: flex; flex-direction: column; margin-top: 2px; border: 2px solid #a7aab3; background: #f0f0f0; }
.propbox h3 { height: 44px; flex: none; line-height: 44px; padding-left: 13px; background: #dcdcdc; font-weight: 700; }
.proprow { display: flex; padding-bottom: 4px; border-bottom: 2px solid #d8d8d8; }
.props { flex: 1; min-width: 0; padding-left: 20px; }
.prop { display: grid; grid-template-columns: 1fr 152px; column-gap: 2px; height: 46px; padding-bottom: 2px; }
.prop.head { height: 42px; }
.prop.short { height: 42px; }
.prop label { position: relative; display: flex; align-items: center; padding: 2px 0 0 64px; background: #fff; white-space: nowrap; overflow: hidden; }
.prop.head label { padding-left: 35px; }
.prop.head label::before { content: ""; position: absolute; left: 11px; top: 14px; border: solid transparent; border-width: 0 0 12px 12px; border-bottom-color: #000; }
.val { display: flex; align-items: center; background: #fff; }
.val output, .val > svg { margin-left: 10px; }
.val .pick { width: 100%; }
.val input[type=checkbox] { appearance: none; width: 28px; height: 28px; margin: 0 0 0 11px; border: 2px solid #6e6e6e; background: #fff; flex: none; }
.val input.tinted { border-color: #1c4a7c; background: linear-gradient(135deg, #d5d5d5, #fafafa); }
.pct { width: 110px; height: 36px; margin-left: 3px; padding: 0 4px; border: 2px solid #c8c8c8; background: #fff; color: #7d7d7d; }
.prop-scroll .gthumb { margin-top: auto; height: 397px; margin-bottom: 5px; }
.note { flex: 1; margin-top: 6px; background: #dcdcdc; }
.grip { display: flex; align-items: center; justify-content: center; gap: 5px; height: 12px; flex: none; border-bottom: 2px solid #c5c9d0; }
.grip i { width: 3px; height: 3px; background: #333; }
.view { gap: 19px; height: 56px; flex: none; padding-left: 11px; border-bottom: 2px solid #c5c9d0; font-weight: 700; }
.view.on { background: #efffff; }
.dock-foot { height: 54px; flex: none; }
.desk { height: 11px; flex: none; border-top: 2px solid #adb1be; background: linear-gradient(90deg, #dbeaf8, #d5e5fa 25%, #dcdcf4 52%, #d8e0f4 75%, #dceaf8); }

.popup { position: absolute; left: 0; top: 45px; bottom: 97px; width: 49.4%; display: flex; flex-direction: column; border: 2px solid #d8d8d8; border-top-color: #dcdcdc; border-radius: 0 6px 6px 0; background: #f9f9f9; box-shadow: 5px 5px 8px rgba(0, 0, 0, .5); }
.popup-top { height: 48px; flex: none; background: linear-gradient(#fff, #f3f3f3 50%, #fdfdfd); border-bottom: 2px solid #ececec; }
.filebtn { width: 114px; height: 46px; margin: -2px 0 0 -2px; justify-content: flex-end; padding-right: 26px; border: 2px solid #5a9bd0; border-radius: 0 5px 0 0; background: linear-gradient(#a9d0f0, #8fc0e8 48%, #56a3dd 50%, #9bcbf0); color: #fff; }
.popup-body { flex: 1; min-height: 0; display: flex; padding-right: 4px; }
.menu { width: 466px; flex: none; display: flex; flex-direction: column; padding-top: 2px; background: #fff; border-right: 2px solid #e4e4e4; border-bottom: 2px solid #e0e0e0; }
.menu button { position: relative; flex: 1; width: 100%; padding-top: 2px; }
.ico { width: 98px; display: flex; justify-content: center; padding-right: 2px; }
.ico text { font-weight: 700; fill: #4a97e4; }
.ico .badge { font-size: 16px; fill: #fff; text-anchor: middle; }
.ico .mark { font-size: 25px; }
.ico .sup { font-size: 11px; }
.subarrow { position: absolute; left: 435px; }
.popup-foot { height: 34px; flex: none; background: linear-gradient(#fcfcfc, #f2f2f2); }
.projects { flex: 1; min-width: 0; display: flex; flex-direction: column; margin-left: 3px; padding-bottom: 3px; background: #fafafa; }
.tabs { display: flex; align-items: flex-end; height: 44px; flex: none; }
.tabs button { justify-content: center; height: 40px; border: 2px solid #a5a8a8; border-width: 2px 2px 0 0; background: linear-gradient(#f0f0f0, #e3e3e3); }
.tabs .on { position: relative; height: 46px; margin-bottom: -2px; padding-bottom: 2px; border-width: 2px 2px 0 2px; background: #fdfdfe; }
.panel { flex: 1; min-height: 0; display: flex; flex-direction: column; border: 2px solid #929a9a; border-top-color: #999f9f; padding: 0 12px 11px; background: linear-gradient(#fcfcff, #f3f1eb); }
.toolbar { display: flex; align-items: center; height: 82px; flex: none; padding-top: 2px; }
.toolbar button { justify-content: center; width: 60px; height: 60px; }
.vbar { width: 2px; height: 52px; margin: 0 4px 0 5px; background: #cfccc0; }
.toolbar .drop { width: 30px; }
.toolbar .last { width: 38px; }
.toolbar .after { margin-left: 10px; }
.toolbar .del { position: relative; color: #e68250; }
.del::after { content: ""; position: absolute; inset: -8px -19px -8px -13px; border: 6px solid #fa2012; border-radius: 5px; }
.search { display: flex; align-items: center; height: 44px; flex: none; margin-bottom: 8px; }
.search label { width: 78px; flex: none; }
.search input { flex: 1; min-width: 0; height: 44px; border: 2px solid #aeaeb2; background: #fff; padding: 0 6px; }
.search button { margin: 0 6px 0 15px; }
.listbox { position: relative; flex: 1; min-height: 0; display: flex; border: 2px solid #6f8ca7; background: #fff; }
.tablewrap { flex: 1; min-width: 0; overflow: hidden; }
table { width: 1156px; height: 950px; table-layout: fixed; border-collapse: separate; border-spacing: 0; }
th { position: relative; height: 44px; padding: 4px 32px 0 8px; text-align: left; font-weight: 400; background: linear-gradient(#ebeadb 86%, #d6d2c2); }
th:first-child { padding-left: 6px; }
th::after { content: ""; position: absolute; right: 0; top: 8px; width: 2px; height: 28px; background: #c9c5b4; }
td { padding: 2px 8px 0 8px; border: solid #000; border-width: 0 2px 2px 0; background: #fff; }
th div, td div { height: 30px; overflow: hidden; white-space: nowrap; }
td:first-child { padding: 2px 0 0 2px; }
.remote td:first-child { color: #8b1212; background: #d3d3d3; box-shadow: inset 0 0 0 2px #fff; }
.sel td { background: #0078d7; color: #fff; }
.sel td:first-child { background: #fff; color: #8b1212; box-shadow: inset 0 0 0 2px #2d72b5; }
.winscroll { display: flex; flex-direction: column; align-items: center; width: 34px; flex: none; padding: 54px 0 12px; background: #f0f0f0; color: #a5a5a5; }
.winrail { flex: 1; width: 100%; padding: 12px 0; }
.winrail div { height: 58%; background: #cdcdcd; }
.tip { position: absolute; left: 252px; top: 111px; padding: 12px 0 6px 10px; border: 6px solid #fa2012; border-radius: 5px; background: #f0f1f7; color: #575757; font-size: 23px; line-height: 32px; white-space: nowrap; }
</style>
